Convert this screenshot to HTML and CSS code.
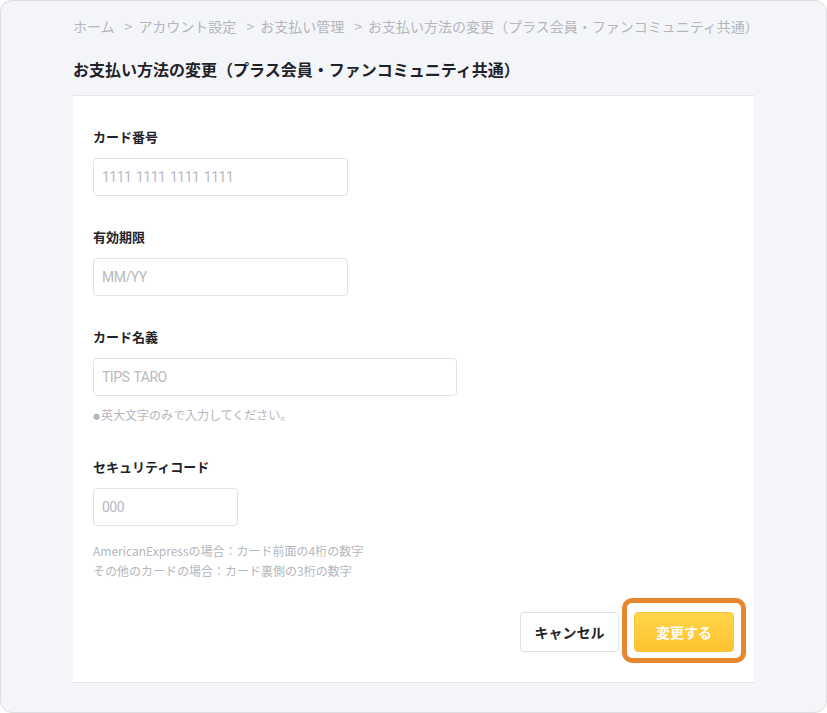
FILE: index.html
```html
<!DOCTYPE html>
<html lang="ja">
<head>
    <meta charset="UTF-8">
    <meta name="viewport" content="width=device-width, initial-scale=1.0">
    <title>お支払い方法の変更</title>
    <link rel="stylesheet" href="styles.css">
</head>
<body>

    <div class="frame">
        <nav class="breadcrumb">
            <span class="crumb">ホーム</span>
            <span class="crumb">アカウント設定</span>
            <span class="crumb">お支払い管理</span>
            <span class="crumb">お支払い方法の変更（プラス会員・ファンコミュニティ共通）</span>
        </nav>

        <h1 class="page-title">お支払い方法の変更（プラス会員・ファンコミュニティ共通）</h1>

        <form class="card">
            <div class="field">
                <label for="card-number">カード番号</label>
                <input type="text" id="card-number" class="input input-md" placeholder="1111 1111 1111 1111">
            </div>

            <div class="field">
                <label for="expiry">有効期限</label>
                <input type="text" id="expiry" class="input input-md" placeholder="MM/YY">
            </div>

            <div class="field">
                <label for="holder">カード名義</label>
                <input type="text" id="holder" class="input input-lg" placeholder="TIPS TARO">
                <p class="note"><span class="dot">●</span>英大文字のみで入力してください。</p>
            </div>

            <div class="field">
                <label for="cvc">セキュリティコード</label>
                <input type="text" id="cvc" class="input input-sm" placeholder="000">
                <p class="help">AmericanExpressの場合：カード前面の4桁の数字<br>その他のカードの場合：カード裏側の3桁の数字</p>
            </div>

            <div class="actions">
                <button type="button" class="btn btn-cancel">キャンセル</button>
                <div class="submit-wrap">
                    <button type="button" class="btn btn-submit">変更する</button>
                    <span class="highlight"></span>
                </div>
            </div>
        </form>
    </div>

</body>
</html>
```

FILE: styles.css
```css
body {
    margin: 0;
    background-color: #fff;
    font-family: "Noto Sans CJK JP", "Noto Sans", sans-serif;
    color: #1f2329;
}
.frame {
    height: 713px;
    box-sizing: border-box;
    border: 1px solid #dcdde1;
    border-radius: 12px;
    background-color: #f4f5f9;
    padding: 15px 72px 0 72px;
}
.breadcrumb {
    font-size: 14px;
    line-height: 20px;
    color: #b3b6bc;
    white-space: nowrap;
    display: flex;
}
.crumb + .crumb::before {
    content: ">";
    margin: 0 6px 0 10px;
}
.page-title {
    margin: 21px 0 14px 0;
    font-size: 16px;
    line-height: 24px;
    font-weight: bold;
    color: #1f2329;
}
.card {
    background-color: #fff;
    border-top: 1px solid #e3e5e9;
    border-bottom: 1px solid #e3e5e9;
    padding: 31px 20px 30px 20px;
}
.field {
    margin-bottom: 31px;
}
.field label {
    display: block;
    font-size: 13px;
    line-height: 20px;
    font-weight: bold;
    margin-bottom: 11px;
}
.input {
    display: block;
    box-sizing: border-box;
    height: 38px;
    padding: 0 8px;
    border: 1px solid #e0e2e5;
    border-radius: 4px;
    font-family: Roboto, "Noto Sans CJK JP", sans-serif;
    font-size: 14px;
    letter-spacing: -0.5px;
    word-spacing: 1.5px;
    color: #1f2329;
    outline: none;
}
.input::placeholder {
    color: #b7bac0;
}
.input-md {
    width: 255px;
}
.input-lg {
    width: 364px;
}
.input-sm {
    width: 145px;
}
.note {
    margin: 9px 0 0 0;
    font-size: 12px;
    line-height: 20px;
    color: #b4b7bc;
}
.dot {
    display: inline-block;
    width: 8px;
    font-size: 7px;
    vertical-align: 1px;
}
.help {
    margin: 15px 0 0 0;
    font-size: 12px;
    line-height: 20px;
    color: #b4b7bc;
}
.actions {
    display: flex;
    justify-content: flex-end;
    gap: 15px;
}
.btn {
    height: 40px;
    border-radius: 4px;
    font-family: "Noto Sans CJK JP", sans-serif;
    font-size: 14px;
    font-weight: bold;
    cursor: pointer;
}
.btn-cancel {
    width: 99px;
    background-color: #fff;
    border: 1px solid #e0e2e5;
    color: #1f2329;
}
.btn-submit {
    width: 100px;
    background: linear-gradient(#ffd64b, #ffc12f);
    border: 1px solid #f7c63d;
    color: #fff;
}
.submit-wrap {
    position: relative;
}
.highlight {
    position: absolute;
    top: -14px;
    bottom: -11px;
    left: -12px;
    right: -12px;
    border: 5px solid #e8862f;
    border-radius: 10px;
    pointer-events: none;
}
```
